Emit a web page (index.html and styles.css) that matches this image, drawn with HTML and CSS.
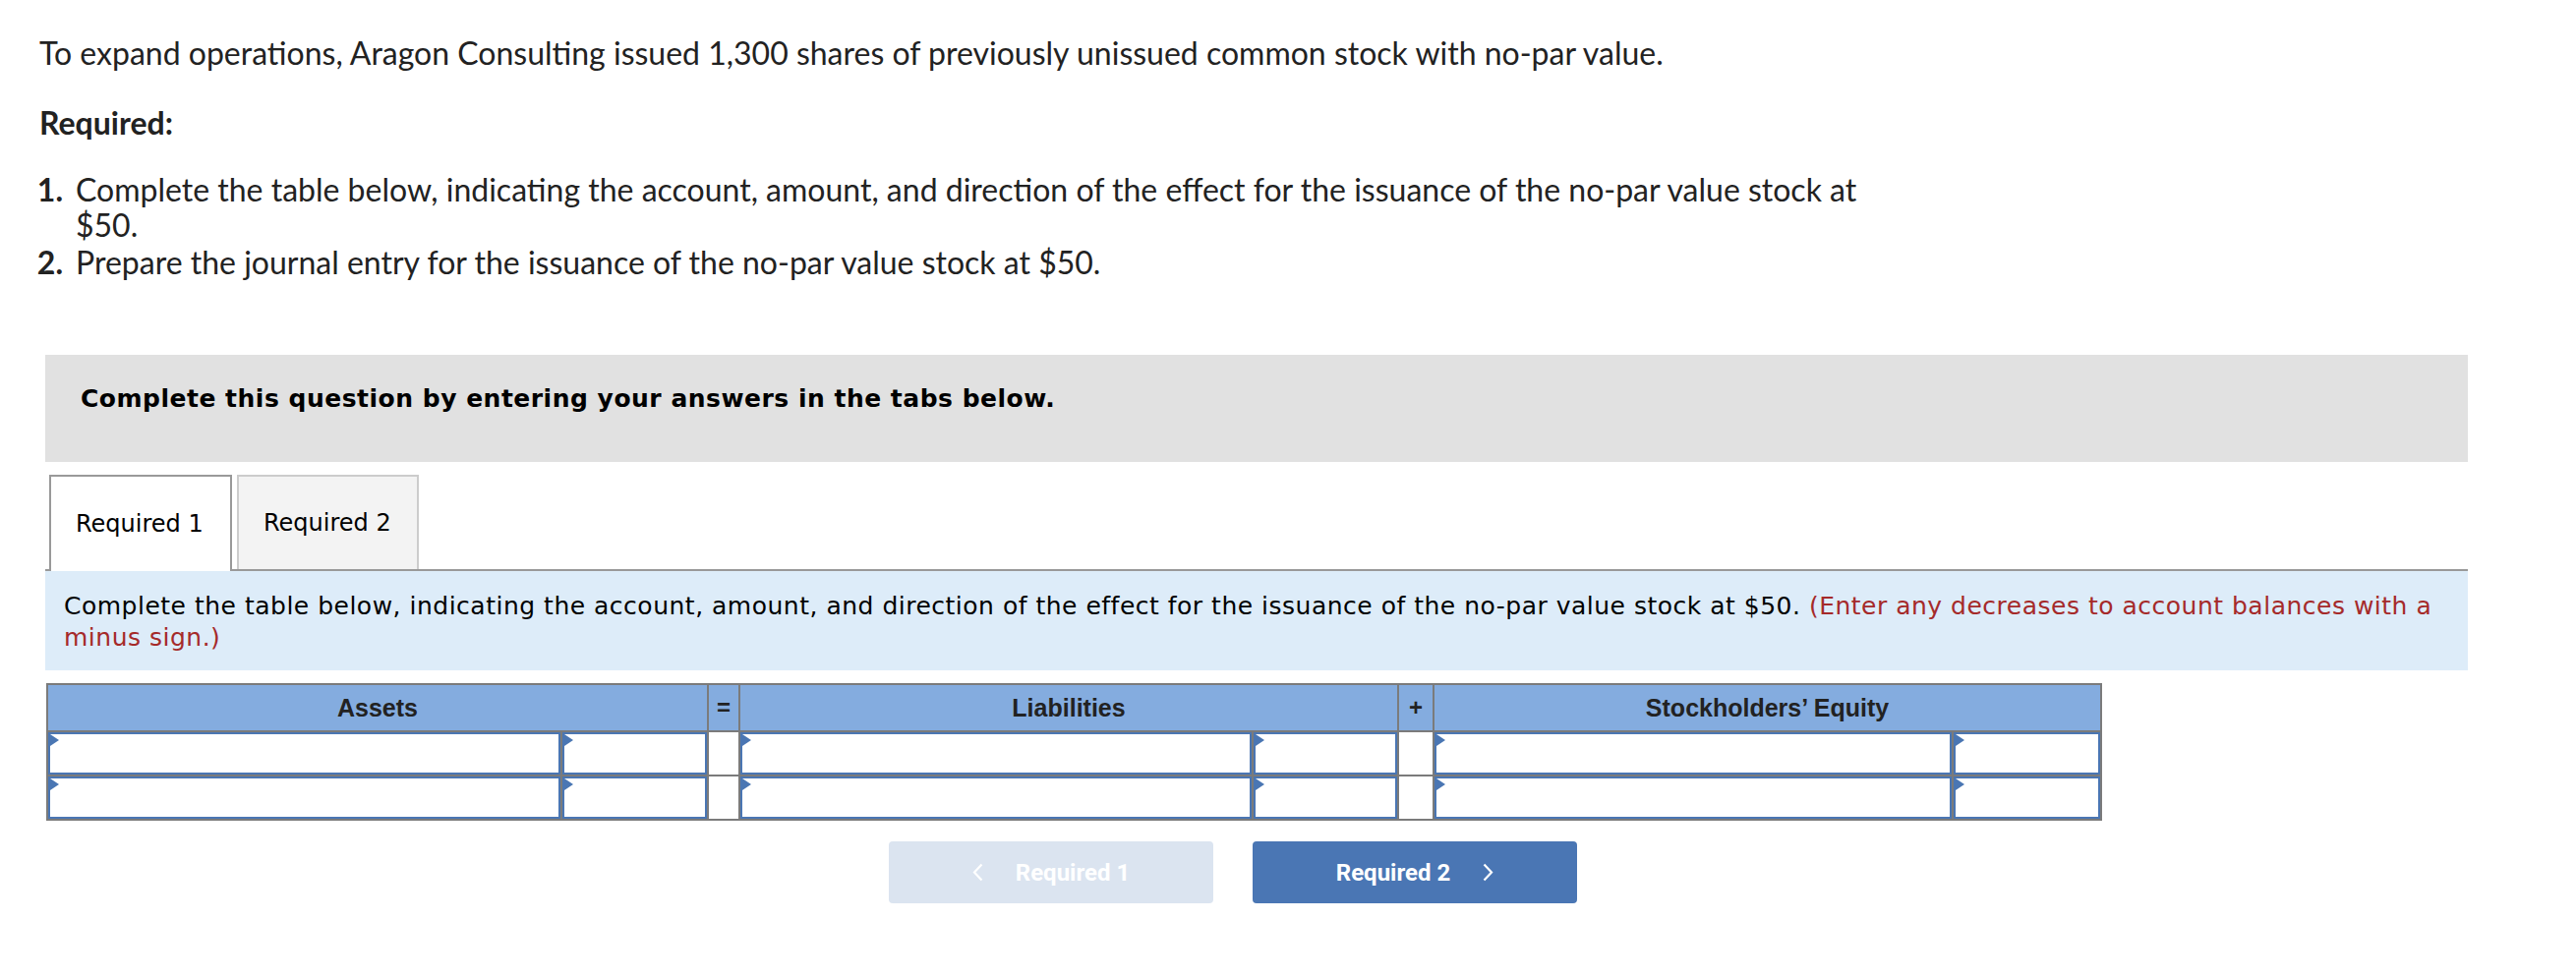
FILE: index.html
```html
<!DOCTYPE html>
<html lang="en">
<head>
<meta charset="utf-8">
<title>Aragon Consulting</title>
<link rel="stylesheet" href="styles.css">
</head>
<body>
<div class="page">
  <p class="intro">To expand operations, Aragon Consulting issued 1,300 shares of previously unissued common stock with no-par value.</p>
  <p class="required">Required:</p>
  <ol class="steps">
    <li><span class="num">1.</span><span class="txt">Complete the table below, indicating the account, amount, and direction of the effect for the issuance of the no-par value stock at $50.</span></li>
    <li><span class="num">2.</span><span class="txt">Prepare the journal entry for the issuance of the no-par value stock at $50.</span></li>
  </ol>

  <div class="question">
    <div class="banner">Complete this question by entering your answers in the tabs below.</div>
    <div class="tabs">
      <div class="tab active">Required 1</div>
      <div class="tab">Required 2</div>
    </div>
    <div class="instructions">Complete the table below, indicating the account, amount, and direction of the effect for the issuance of the no-par value stock at $50. <span class="red">(Enter any decreases to account balances with a minus sign.)</span></div>

    <table class="effects">
      <colgroup>
        <col class="c-acct1"><col class="c-amt1"><col class="c-op1">
        <col class="c-acct2"><col class="c-amt2"><col class="c-op2">
        <col class="c-acct3"><col class="c-amt3">
      </colgroup>
      <thead>
        <tr>
          <th colspan="2">Assets</th>
          <th class="op">=</th>
          <th colspan="2">Liabilities</th>
          <th class="op">+</th>
          <th colspan="2">Stockholders’ Equity</th>
        </tr>
      </thead>
      <tbody>
        <tr>
          <td><div class="field"></div></td>
          <td><div class="field"></div></td>
          <td class="opcell"></td>
          <td><div class="field"></div></td>
          <td><div class="field"></div></td>
          <td class="opcell"></td>
          <td><div class="field"></div></td>
          <td><div class="field"></div></td>
        </tr>
        <tr>
          <td><div class="field"></div></td>
          <td><div class="field"></div></td>
          <td class="opcell"></td>
          <td><div class="field"></div></td>
          <td><div class="field"></div></td>
          <td class="opcell"></td>
          <td><div class="field"></div></td>
          <td><div class="field"></div></td>
        </tr>
      </tbody>
    </table>

    <div class="nav">
      <button class="btn prev" type="button">
        <svg class="chev" width="11" height="19" viewBox="0 0 11 19"><polyline points="9.5,1.5 2,9.5 9.5,17.5" fill="none" stroke="#ffffff" stroke-width="2.2"/></svg>
        <span>Required 1</span>
      </button>
      <button class="btn next" type="button">
        <span>Required 2</span>
        <svg class="chev" width="11" height="19" viewBox="0 0 11 19"><polyline points="1.5,1.5 9,9.5 1.5,17.5" fill="none" stroke="#ffffff" stroke-width="2.2"/></svg>
      </button>
    </div>
  </div>
</div>
</body>
</html>
```

FILE: styles.css
```css
html, body {
  margin: 0;
  padding: 0;
  background: #ffffff;
}

.page {
  padding: 36px 0 0 40px;
  font-family: "Lato", "Liberation Sans", Arial, sans-serif;
  color: #222222;
}

.intro {
  margin: 0;
  font-size: 32px;
  line-height: 35px;
}

.required {
  margin: 36px 0 0 0;
  font-size: 32px;
  line-height: 35px;
  font-weight: bold;
}

.steps {
  list-style: none;
  margin: 33px 0 0 0;
  padding: 0;
  width: 1880px;
  font-size: 32px;
  line-height: 36px;
}

.steps li {
  display: flex;
  margin-bottom: 2px;
}

.steps .num {
  flex: none;
  width: 30px;
  margin-left: -6px;
  margin-right: 13px;
  text-align: right;
  font-weight: bold;
}

.question {
  margin: 76px 0 0 6px;
  width: 2464px;
}

.banner {
  background: #e1e1e1;
  padding: 29px 0 48px 36px;
  font-family: "DejaVu Sans", Verdana, sans-serif;
  font-weight: bold;
  font-size: 25px;
  letter-spacing: 0.5px;
  line-height: 32px;
  color: #000000;
}

.tabs {
  display: flex;
  gap: 5px;
  margin-top: 13px;
  padding-left: 4px;
  border-bottom: 2px solid #999999;
}

.tab {
  box-sizing: border-box;
  width: 185px;
  height: 96px;
  padding-left: 25px;
  display: flex;
  align-items: center;
  font-family: "DejaVu Sans", Verdana, sans-serif;
  font-size: 24px;
  color: #000000;
  background: #f3f3f3;
  border: 2px solid #cccccc;
  border-bottom: none;
}

.tab.active {
  width: 186px;
  height: 98px;
  margin-bottom: -2px;
  background: #ffffff;
  border-color: #999999;
}

.instructions {
  background: #ddecf9;
  padding: 20px 8px 17px 19px;
  font-family: "DejaVu Sans", Verdana, sans-serif;
  font-size: 25px;
  letter-spacing: 0.5px;
  line-height: 32px;
  color: #000000;
}

.red {
  color: #a52a2a;
}

.effects {
  border-collapse: collapse;
  table-layout: fixed;
  width: 2089px;
  margin: 13px 0 0 1px;
}

.c-acct1 { width: 523px; }
.c-amt1 { width: 149px; }
.c-op1 { width: 32px; }
.c-acct2 { width: 522px; }
.c-amt2 { width: 148px; }
.c-op2 { width: 36px; }
.c-acct3 { width: 528px; }
.c-amt3 { width: 151px; }

.effects th,
.effects td {
  border: 2px solid #7b7b7b;
  padding: 0;
}

.effects th {
  background: #84acdf;
  height: 46px;
  font-family: "Liberation Sans", Arial, sans-serif;
  font-weight: bold;
  font-size: 25px;
  color: #222222;
  text-align: center;
  vertical-align: middle;
}

.effects th.op {
  font-size: 24px;
}

.effects td {
  height: 43px;
  background: #ffffff;
  vertical-align: top;
}

.field {
  position: relative;
  box-sizing: border-box;
  height: 43px;
  border: 2px solid #4a76b3;
}

.field::before {
  content: "";
  position: absolute;
  left: 0;
  top: 0;
  width: 0;
  height: 0;
  border-left: 9px solid #4a76b3;
  border-top: 6px solid transparent;
  border-bottom: 6px solid transparent;
}

.nav {
  display: flex;
  gap: 40px;
  margin: 21px 0 0 858px;
}

.btn {
  box-sizing: border-box;
  width: 330px;
  height: 63px;
  border: none;
  border-radius: 4px;
  display: flex;
  align-items: center;
  justify-content: center;
  gap: 33px;
  font-family: "Roboto", "Liberation Sans", Arial, sans-serif;
  font-weight: bold;
  font-size: 24px;
  color: #ffffff;
  padding: 0;
}

.btn.prev {
  background: #dbe4f0;
}

.btn.next {
  background: #4a76b4;
}

.chev {
  display: block;
}
```
